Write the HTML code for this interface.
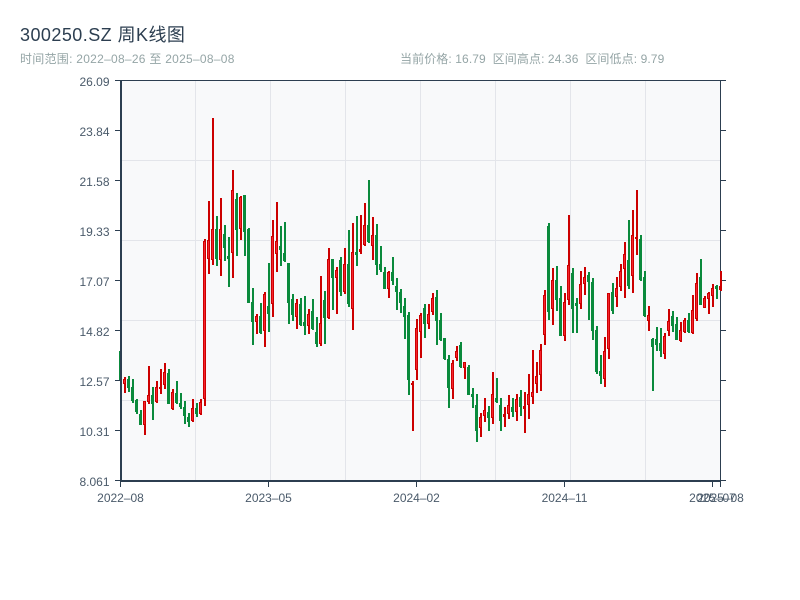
<!DOCTYPE html>
<html lang="zh-CN">
<head>
<meta charset="utf-8">
<title>300250.SZ 周K线图</title>
<style>
html,body{margin:0;padding:0;background:#fff;width:800px;height:600px;overflow:hidden}
body{position:relative;font-family:"Liberation Sans","Noto Sans CJK SC",sans-serif}
.t{position:absolute;white-space:pre}
svg{position:absolute;left:0;top:0}
svg text{font-family:"Liberation Sans","Noto Sans CJK SC",sans-serif;font-size:12px;fill:#4a5a6a}
</style>
</head>
<body>
<div class="t" style="left:20px;top:24px;font-size:18px;line-height:22px;letter-spacing:.45px;color:#2c3e50">300250.SZ 周K线图</div>
<div class="t" style="left:20px;top:51px;font-size:12px;line-height:16px;letter-spacing:.27px;color:#95a5a6">时间范围: 2022–08–26 至 2025–08–08</div>
<div class="t" style="left:400px;top:51px;font-size:12px;line-height:16px;letter-spacing:.1px;color:#95a5a6">当前价格: 16.79  区间高点: 24.36  区间低点: 9.79</div>
<svg width="800" height="600" viewBox="0 0 800 600">
<rect x="120" y="81" width="600" height="400" fill="#f8f9fa"/>
<path d="M195.5 81V481M270.5 81V481M345.5 81V481M420.5 81V481M495.5 81V481M570.5 81V481M645.5 81V481M120 160.5H720M120 240.5H720M120 320.5H720M120 400.5H720" stroke="#e3e5ea" stroke-width="1" fill="none"/>
<path fill="none" stroke="#0a8a3c" stroke-width="2" d="M129 376V392M133 379V403M137 399V414M141 410V425M153 387V420M169 369V404M177 381V404M181 393V409M185 401V424M189 413V427M197 403V417M217 216V266M225 225V261M229 237V287M237 193V256M245 195V256M249 228V303M253 288V345M261 303V334M269 263V332M281 226V266M285 222V262M289 263V324M293 294V321M301 298V326M305 296V335M313 299V330M317 317V347M325 291V344M333 259V310M341 257V296M349 230V307M357 216V266M369 180V243M377 224V275M381 246V272M385 267V289M393 257V285M397 278V310M401 289V313M405 298V339M409 312V395M425 304V338M437 290V345M441 313V341M445 338V360M449 355V408M461 342V368M469 365V395M473 388V408M477 394V442M489 406V431M497 378V403M501 398V431M513 398V417M521 390V416M549 223V320M557 266V311M561 286V336M573 268V333M577 298V333M589 272V320M593 278V340M597 326V374M601 355V384M613 283V314M629 220V289M641 235V281M645 271V317M653 338V391M657 327V351M661 328V357M673 311V332M677 317V340M689 313V333M701 259V305M717 285V299"/>
<path transform="translate(.6 0)" fill="none" stroke="#0a8a3c" stroke-width="3" d="M119.9 351V380M127.9 379V388M131.9 387V401M135.9 400V412M139.9 414V425M151.9 395V404M167.9 373V404M175.9 393V403M179.9 403V407M183.9 407V416M187.9 417V422M195.9 408V414M215.9 229V259M223.9 234V248M227.9 256V259M235.9 199V230M243.9 195V232M247.9 229V303M251.9 302V322M259.9 316V333M267.9 306V314M279.9 246V250M283.9 253V261M287.9 263V303M291.9 299V315M299.9 304V325M303.9 322V326M311.9 311V329M315.9 332V344M323.9 300V318M331.9 259V278M339.9 260V292M347.9 264V304M355.9 252V255M367.9 225V242M375.9 235V265M379.9 264V270M383.9 272V289M391.9 272V281M395.9 286V292M399.9 292V303M403.9 306V317M407.9 315V380M423.9 308V324M435.9 297V321M439.9 320V340M443.9 338V359M447.9 359V388M459.9 345V367M467.9 367V395M471.9 394V397M475.9 405V431M487.9 412V418M495.9 398V402M499.9 405V421M511.9 407V412M519.9 397V407M547.9 226V312M555.9 280V300M559.9 298V336M571.9 273V309M575.9 303V306M587.9 275V282M591.9 282V331M595.9 330V372M599.9 371V376M611.9 292V311M627.9 260V286M639.9 239V280M643.9 277V316M651.9 339V347M655.9 339V345M659.9 343V351M671.9 316V326M675.9 324V340M687.9 320V332M699.9 277V305M715.9 286V289"/>
<path fill="none" stroke="#cc0000" stroke-width="2" d="M125 377V393M145 401V435M149 366V404M157 381V403M161 369V394M165 363V389M173 389V410M193 399V422M201 399V415M205 239V406M209 201V274M213 118V265M221 198V276M233 170V278M241 196V240M257 314V334M265 292V347M273 220V317M277 202V272M297 299V329M309 309V334M321 276V346M329 248V319M337 267V314M345 248V294M353 223V330M361 215V254M365 203V246M373 217V260M389 271V298M413 381V431M417 319V380M421 313V358M429 304V329M433 293V315M453 360V399M457 346V361M465 362V379M481 413V437M485 398V422M493 372V424M505 407V427M509 395V419M517 394V421M525 392V433M529 374V419M533 350V404M537 362V393M541 344V391M545 290V345M553 268V325M565 293V341M569 215V305M581 271V309M585 267V295M605 337V387M609 293V359M617 277V307M621 264V291M625 242V298M633 210V293M637 190V255M649 306V331M665 333V359M669 309V336M681 322V342M685 318V333M693 295V334M697 273V321M705 296V308M709 292V314M713 284V307"/>
<path transform="translate(.6 0)" fill="none" stroke="#cc0000" stroke-width="3" d="M123.9 379V384M143.9 401V425M147.9 395V402M155.9 387V402M159.9 387V389M163.9 372V385M171.9 392V409M191.9 408V421M199.9 402V414M203.9 241V399M207.9 240V259M211.9 229V260M219.9 229V260M231.9 190V253M239.9 197V229M255.9 316V322M263.9 294V331M271.9 236V304M275.9 241V254M295.9 303V317M307.9 314V326M319.9 323V344M327.9 259V318M335.9 270V278M343.9 264V292M351.9 252V309M359.9 249V252M363.9 225V245M371.9 235V246M387.9 272V289M411.9 383V385M415.9 328V370M419.9 315V332M427.9 314V324M431.9 298V312M451.9 363V389M455.9 351V358M463.9 362V368M479.9 417V428M483.9 410V416M491.9 394V418M503.9 414V417M507.9 405V414M515.9 399V412M523.9 406V409M527.9 394V405M531.9 392V397M535.9 376V384M539.9 350V375M543.9 295V335M551.9 280V309M563.9 302V336M567.9 265V300M579.9 284V304M583.9 277V284M603.9 351V379M607.9 293V349M615.9 288V297M619.9 271V287M623.9 254V269M631.9 235V276M635.9 237V239M647.9 315V321M663.9 336V354M667.9 321V331M679.9 330V341M683.9 320V332M691.9 310V333M695.9 283V319M703.9 298V308M707.9 293V299M711.9 288V296"/>
<path transform="translate(.6 0)" fill="none" stroke="#f5232d" stroke-width="1" d="M123.9 380V383M143.9 402V424M147.9 396V401M155.9 388V401M163.9 373V384M171.9 393V408M191.9 409V420M199.9 403V413M203.9 242V398M207.9 241V258M211.9 230V259M219.9 230V259M231.9 191V252M239.9 198V228M255.9 317V321M263.9 295V330M271.9 237V303M275.9 242V253M295.9 304V316M307.9 315V325M319.9 324V343M327.9 260V317M335.9 271V277M343.9 265V291M351.9 253V308M363.9 226V244M371.9 236V245M387.9 273V288M415.9 329V369M419.9 316V331M427.9 315V323M431.9 299V311M451.9 364V388M455.9 352V357M463.9 363V367M479.9 418V427M483.9 411V415M491.9 395V417M507.9 406V413M515.9 400V411M527.9 395V404M531.9 393V396M535.9 377V383M539.9 351V374M543.9 296V334M551.9 281V308M563.9 303V335M567.9 266V299M579.9 285V303M583.9 278V283M603.9 352V378M607.9 294V348M615.9 289V296M619.9 272V286M623.9 255V268M631.9 236V275M647.9 316V320M663.9 337V353M667.9 322V330M679.9 331V340M683.9 321V331M691.9 311V332M695.9 284V318M703.9 299V307M707.9 294V298M711.9 289V295"/>
<path d="M115 80.5H720.5M720.5 81V481M720 80.5H726M720 130.5H726M720 180.5H726M720 230.5H726M720 280.5H726M720 330.5H726M720 380.5H726M720 430.5H726M720 480.5H726" stroke="#2c3e50" stroke-width="1" fill="none"/>
<path d="M121 80V482M120 481H720" stroke="#2c3e50" stroke-width="2" fill="none"/>
<path d="M115 130.5H120M115 180.5H120M115 230.5H120M115 280.5H120M115 330.5H120M115 380.5H120M115 430.5H120M115 480.5H120M120.5 481V487M268.5 481V487M416.5 481V487M564.5 481V487M712.5 481V487M720.5 481V487" stroke="#2c3e50" stroke-width="1" fill="none"/>
<path fill="none" stroke="#cc0000" stroke-width="2" d="M721 271V291"/>
<path fill="none" stroke="#cc0000" stroke-width="3" d="M720.5 286V290"/>
<g text-anchor="end">
<text x="109.5" y="86">26.09</text>
<text x="109.5" y="136">23.84</text>
<text x="109.5" y="186">21.58</text>
<text x="109.5" y="236">19.33</text>
<text x="109.5" y="286">17.07</text>
<text x="109.5" y="336">14.82</text>
<text x="109.5" y="386">12.57</text>
<text x="109.5" y="436">10.31</text>
<text x="109.5" y="486">8.061</text>
</g>
<g text-anchor="middle">
<text x="120.5" y="502">2022–08</text>
<text x="268.5" y="502">2023–05</text>
<text x="416.5" y="502">2024–02</text>
<text x="564.5" y="502">2024–11</text>
<text x="712.5" y="502">2025–07</text>
<text x="720.5" y="502">2025–08</text>
</g>
</svg>
</body>
</html>
